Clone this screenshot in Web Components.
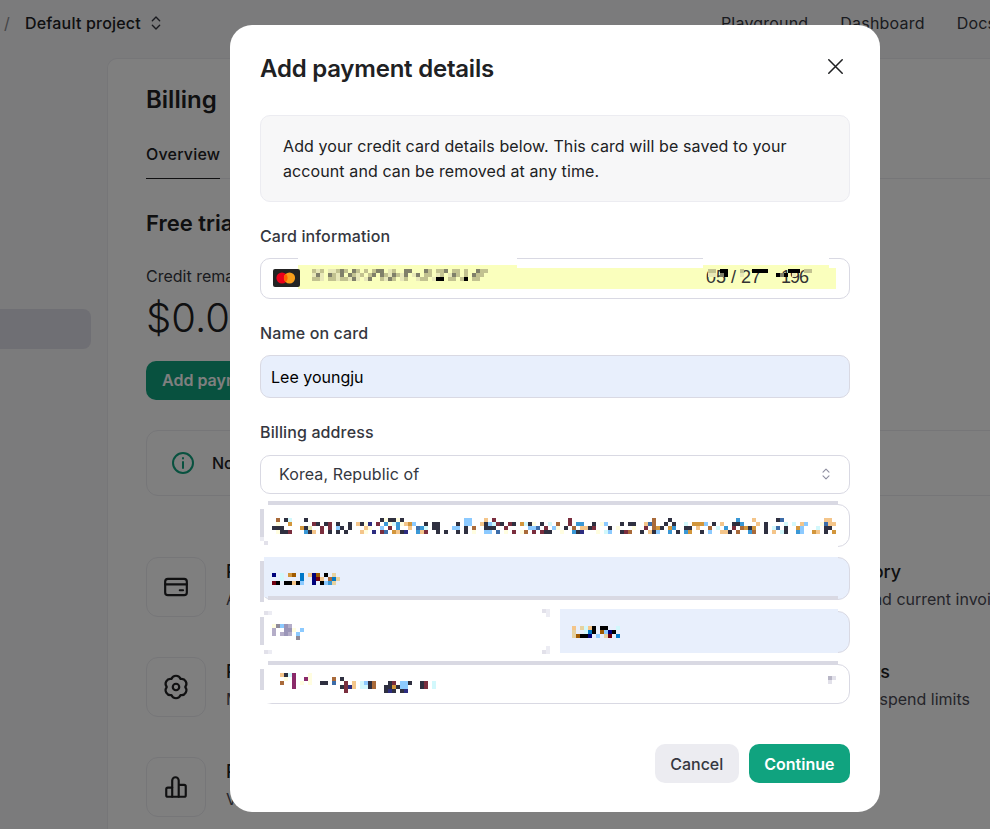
<!DOCTYPE html>
<html>
<head>
<meta charset="utf-8">
<style>
  html, body { margin: 0; height: 100%; overflow: hidden; background: #f7f7f8; font-family: Inter, "Liberation Sans", sans-serif; }
</style>
</head>
<body>
<billing-page></billing-page>
<pay-dialog></pay-dialog>

<script>
// icons used more than once or too long to keep inline
const ICONS = {
  updown: '<path d="M8 9.5l4-4 4 4M8 14.5l4 4 4-4"/>',
  card: '<rect x="2" y="4.5" width="20" height="15" rx="2.5"/><path d="M2 9.5h20M15.5 15h3"/>',
  gear: '<path d="M7.75 4.64A4.5 4.5 0 0 1 16.25 4.64A4.5 4.5 0 0 1 20.5 12A4.5 4.5 0 0 1 16.25 19.36A4.5 4.5 0 0 1 7.75 19.36A4.5 4.5 0 0 1 3.5 12A4.5 4.5 0 0 1 7.75 4.64Z"/><circle cx="12" cy="12" r="3"/>',
  bars: '<path d="M8.5 12.5h-4a1.5 1.5 0 0 0-1.5 1.5v5.5a1.5 1.5 0 0 0 1.5 1.5h15a1.5 1.5 0 0 0 1.5-1.5v-8a1.5 1.5 0 0 0-1.5-1.5h-4"/><path d="M8.5 21v-15a3 3 0 0 1 6 0v15"/>',
  info: '<circle cx="12" cy="12" r="10"/><path d="M12 11v6M12 7v.5"/>',
  close: '<path d="M5 5l14 14M19 5L5 19"/>'
};
function icon(name, size, sw) {
  return `<svg width="${size}" height="${size}" viewBox="0 0 24 24" fill="none" stroke="currentColor" stroke-width="${sw}" stroke-linecap="round" stroke-linejoin="round">${ICONS[name]}</svg>`;
}

// blocky blurred text, rows split by | , a number skips that many cells
const PIX = {
  d:'#2f3040', m:'#7a2e3e', b:'#3a98d6', l:'#8ccaff', o:'#d2963c', p:'#f4c58a', c:'#d2f8fc', y:'#fffde0',
  n:'#2c2c80', r:'#a96a3a', s:'#3c6ca8', K:'#000000', N:'#00007a', B:'#0078c8', M:'#700010', R:'#a05a00',
  t:'#e6d2a0', g:'#c2c290', h:'#80806a', e:'#e8e8b8', u:'#9a95b8', v:'#b4adc8', w:'#8f8a98', P:'#8a2a6a',
  z:'#b8b6c6', x:'#e2e1ea', a:'#ececf3'
};
class PixelText extends HTMLElement {
  connectedCallback() {
    this.attachShadow({mode: 'open'});
    const cols = parseInt(this.getAttribute('cols') || '200');
    const rows = this.getAttribute('rows').split('|');
    let rects = '', maxX = 0;
    rows.forEach((row, y) => {
      let x = 0;
      for (const t of row.match(/\d+|[a-zA-Z]/g) || []) {
        if (/\d/.test(t)) { x += parseInt(t); continue; }
        if (x < cols) { rects += `<rect x="${x*4}" y="${y*4}" width="4" height="4" fill="${PIX[t]}"/>`; maxX = Math.max(maxX, x+1); }
        x++;
      }
    });
    this.shadowRoot.innerHTML = `<style>:host{display:block;line-height:0}</style>
      <svg width="${maxX*4}" height="${rows.length*4}" shape-rendering="crispEdges">${rects}</svg>`;
  }
}
customElements.define('pixel-text', PixelText);

class BillingTile extends HTMLElement {
  connectedCallback() {
    this.attachShadow({mode: 'open'});
    this.shadowRoot.innerHTML = `<style>
      :host { display: flex; gap: 20px; height: 60px; align-items: center; }
      .box { width: 58px; height: 58px; border: 1px solid #ececf1; border-radius: 12px; display: flex; align-items: center; justify-content: center; color: #202123; flex: none; }
      .txt { padding-bottom: 4px; }
      .t { font-size: 18px; font-weight: 500; color: #202123; line-height: 28px; white-space: nowrap; }
      .s { font-size: 16px; color: #4a4a55; line-height: 26px; white-space: nowrap; }
    </style>
    <div class="box">${icon(this.getAttribute('icon'), 26, 2)}</div>
    <div class="txt"><div class="t">${this.getAttribute('title')}</div><div class="s">${this.getAttribute('sub')}</div></div>`;
  }
}
customElements.define('billing-tile', BillingTile);

class BillingPage extends HTMLElement {
  connectedCallback() {
    this.attachShadow({mode: 'open'});
    this.shadowRoot.innerHTML = `<style>
      :host { display: block; height: 829px; width: 990px; overflow: hidden; color: #202123; }
      .top { height: 58px; display: flex; align-items: center; font-size: 16px; font-weight: 500; box-sizing: border-box; padding: 0 0 12px 4px; letter-spacing: .2px; width: 1100px; }
      .top .slash { color: #8a8a8f; font-weight: 400; margin-right: 15px; }
      .top svg { margin-left: 4px; color: #353740; }
      .nav { display: flex; gap: 32px; margin-left: 554px; font-weight: 400; color: #353740; }
      .cols { display: flex; width: 1100px; }
      .side { width: 107px; flex: none; box-sizing: border-box; padding-top: 251px; }
      .side div { width: 91px; height: 40px; background: #dfdee8; border-radius: 0 8px 8px 0; }
      .main { flex: 1; min-width: 0; height: 771px; background: #fff; border: 1px solid #ececf1; border-right: 0; border-radius: 10px 0 0 0; padding: 0 0 0 38px; overflow: hidden; }
      h1 { margin: 25px 0 0; font-size: 24px; font-weight: 600; line-height: 32px; }
      .tabs { border-bottom: 1px solid #ececf1; margin-top: 20px; height: 42px; }
      .tabs span { display: inline-block; font-size: 16px; font-weight: 500; line-height: 24px; padding-top: 6px; height: 36px; border-bottom: 1px solid #202123; letter-spacing: .2px; }
      h2 { margin: 28px 0 0; font-size: 22px; font-weight: 600; line-height: 32px; }
      .lbl { margin-top: 25px; font-size: 16px; line-height: 24px; color: #353740; }
      .amt { font-size: 40px; font-weight: 300; line-height: 56px; margin-top: 2px; color: #202123; }
      .add { margin-top: 15px; width: 240px; height: 39px; background: #10a37f; color: #fff; font-size: 16px; font-weight: 600; border-radius: 10px; line-height: 39px; padding-left: 16px; box-sizing: border-box; }
      .note { margin-top: 30px; width: 1000px; height: 66px; border: 1px solid #ececf1; border-radius: 12px; box-sizing: border-box; display: flex; align-items: center; padding-left: 24px; gap: 17px; font-size: 16px; font-weight: 500; }
      .note svg { color: #10a37f; flex: none; }
      .grid { margin-top: 61px; display: grid; grid-template-columns: 559px 1fr; row-gap: 40px; }
    </style>
    <div class="top">
      <span class="slash">/</span><span>Default project</span>${icon('updown', 22, 1.5)}
      <div class="nav"><span>Playground</span><span>Dashboard</span><span>Docs</span></div>
    </div>
    <div class="cols">
      <div class="side"><div></div></div>
      <div class="main">
        <h1>Billing</h1>
        <div class="tabs"><span>Overview</span></div>
        <h2>Free trial</h2>
        <div class="lbl">Credit remaining</div>
        <div class="amt">$0.00</div>
        <div class="add">Add payment</div>
        <div class="note">${icon('info', 24, 2)}<span>Note:</span></div>
        <div class="grid">
          <billing-tile icon="card" title="Payment methods" sub="Add or change payment method"></billing-tile>
          <billing-tile icon="card" title="Billing history" sub="View past and current invoices"></billing-tile>
          <billing-tile icon="gear" title="Preferences" sub="Manage billing information"></billing-tile>
          <billing-tile icon="gear" title="Usage limits" sub="Set monthly spend limits"></billing-tile>
          <billing-tile icon="bars" title="Pricing" sub="View pricing and FAQs"></billing-tile>
        </div>
      </div>
    </div>`;
  }
}
customElements.define('billing-page', BillingPage);

class FormLabel extends HTMLElement {
  connectedCallback() {
    this.attachShadow({mode: 'open'});
    this.shadowRoot.innerHTML = `<style>
      :host { display: block; font-size: 16px; font-weight: 500; line-height: 24px; color: #353740; margin: 22px 0 10px; letter-spacing: .12px; }
    </style><slot></slot>`;
  }
}
customElements.define('form-label', FormLabel);

// input box with the retouched edges of the screenshot; the attributes say which edges are kept
class AddrField extends HTMLElement {
  connectedCallback() {
    this.attachShadow({mode: 'open'});
    this.shadowRoot.innerHTML = `<style>
      :host { display: block; position: relative; height: var(--h, 43px); margin-top: var(--mt, 10px); }
      .box { box-sizing: border-box; height: 100%; border: 1px solid #d9d9e3; border-radius: 12px; background: #fff; }
      :host([blue]) .box { background: #e8effc; }
      .mask { position: absolute; left: 0; right: 12px; top: 0; bottom: 0; background: #fff; }
      :host([blue]) .mask { left: 4px; background: #e8effc; bottom: 3px; }
      :host([flush]) .mask { left: 0; top: -2px; bottom: 0; }
      :host([open]) .mask { right: 0; }
      :host([keepbottom]) .mask { bottom: 1px; }
      .edge { position: absolute; left: 0; width: 4px; top: 0; bottom: 0; background: #fff; }
      .strip { position: absolute; left: 0; width: 4px; top: var(--st, 5px); height: var(--sh, 28px); background: #d9d9e3; }
      .bar { position: absolute; left: 8px; right: 12px; height: 4px; background: #d9d9e3; }
      .bar.t { top: -3px; }
      .bar.b { bottom: 0; }
      .slot { position: absolute; inset: 0; display: flex; align-items: center; padding-left: 12px; box-sizing: border-box; }
    </style>
    <div class="box"></div><div class="edge"></div><div class="mask"></div><div class="strip"></div>
    ${this.hasAttribute('topbar') ? '<div class="bar t"></div>' : ''}
    ${this.hasAttribute('botbar') ? '<div class="bar b"></div>' : ''}
    <div class="slot"><slot></slot></div>`;
  }
}
customElements.define('addr-field', AddrField);

class UiButton extends HTMLElement {
  connectedCallback() {
    this.attachShadow({mode: 'open'});
    this.shadowRoot.innerHTML = `<style>
      :host { display: inline-flex; align-items: center; height: 39px; padding: 0 15.5px; border-radius: 10px; font-size: 16px; font-weight: 500; background: #ececf1; color: #353740; }
      :host([primary]) { background: #10a37f; color: #fff; font-weight: 600; }
    </style><slot></slot>`;
  }
}
customElements.define('ui-button', UiButton);

class PayDialog extends HTMLElement {
  connectedCallback() {
    this.attachShadow({mode: 'open'});
    this.shadowRoot.innerHTML = `<style>
      :host { position: fixed; inset: 0; background: rgba(0,0,0,.5); display: block; padding: 25px 0 0 230px; box-sizing: border-box; color: #202123; }
      .modal { width: 650px; height: 787px; box-sizing: border-box; background: #fff; border-radius: 22px; padding: 0 30px; display: flex; flex-direction: column; }
      .head { height: 90px; flex: none; display: flex; align-items: center; justify-content: space-between; padding-bottom: 2px; box-sizing: border-box; }
      .head h3 { margin: 0; font-size: 24px; font-weight: 600; line-height: 32px; color: #202123; letter-spacing: -.22px; }
      .head svg { color: #202123; margin: 0 3px 6px 0; }
      .infobox { box-sizing: border-box; height: 87px; background: #f7f7f8; border: 1px solid #ececf1; border-radius: 10px; padding: 18px 22px; font-size: 16px; line-height: 25px; color: #202123; letter-spacing: .1px; }
      .field { box-sizing: border-box; border: 1px solid #d9d9e3; border-radius: 10px; display: flex; align-items: center; font-size: 16px; flex: none; }
      .card { height: 41px; position: relative; }
      .band { position: absolute; left: 37px; right: 13px; top: 9px; height: 21px; background: #faffbd; }
      .patch { position: absolute; top: -1px; height: 7px; background: #fff; }
      .patch2 { position: absolute; top: 6px; height: 3px; background: #faffbd; }
      .brand { position: absolute; left: 12px; top: 10px; width: 27px; height: 18px; background: #232323; border-radius: 2px; }
      .num { position: absolute; left: 51px; top: 10px; }
      .exp { position: absolute; left: 445px; top: 5px; font: 18px/26px "Liberation Sans", sans-serif; color: #333; white-space: pre; }
      .exp span { display: inline-block; margin-left: 20px; letter-spacing: -1px; }
      .exppix { position: absolute; left: 447px; top: 10px; }
      .name { height: 43px; background: #e8effc; padding-left: 10px; color: #000; }
      .select { height: 39px; padding: 0 14px 1px 18px; justify-content: space-between; color: #353740; border-radius: 10px; margin-top: 1px; letter-spacing: .1px; }
      .select svg { color: #8e8ea0; }
      .split { display: flex; gap: 10px; --h: 42px; --mt: 11px; }
      .split addr-field { flex: 1; }
      .split addr-field:first-child { flex: none; width: 290px; }
      .foot { margin-top: 40px; display: flex; justify-content: flex-end; gap: 10px; }
      .abs { position: absolute; }
    </style>
    <div class="modal">
      <div class="head"><h3>Add payment details</h3>${icon('close', 23, 1.6)}</div>
      <div class="infobox">Add your credit card details below. This card will be saved to your account and can be removed at any time.</div>
      <form-label>Card information</form-label>
      <div class="field card">
        <div class="band"></div>
        <div class="patch" style="left:37px;width:219px"></div><div class="patch2" style="left:37px;width:219px"></div>
        <div class="patch" style="left:442px;width:126px"></div><div class="patch2" style="left:442px;width:126px"></div>
        <div class="brand"><svg width="27" height="18" viewBox="0 0 27 18"><circle cx="9" cy="9" r="5.6" fill="#eb001b"/><circle cx="16.5" cy="9" r="5.6" fill="#f79e1b"/><path d="M12.75 4.8a5.6 5.6 0 0 1 0 8.4a5.6 5.6 0 0 1 0-8.4Z" fill="#ff5f00"/></svg></div>
        <pixel-text class="num" cols="44" rows="geg1eeghg1hg1g1ghh1eg2hh3hg1ggh1gg1g2hgg1hhh|ehe1hgeh1hgeg1gh1hgehgeh1eh1gg1eg1ehg1g1hgg1e1hg|gge1ggeggehe1eh2gehg1eg2egg1eKK1gg1gK1gg2eg"></pixel-text>
        <span class="exp">05 / 27<span>196</span></span>
        <pixel-text class="exppix" rows="gg1KK3g2KKKK5KKK1gg|ee1hK3e8KhK1e"></pixel-text>
      </div>
      <form-label>Name on card</form-label>
      <div class="field name">Lee youngju</div>
      <form-label style="margin-bottom:10px">Billing address</form-label>
      <div class="field select"><span>Korea, Republic of</span>${icon('updown', 18, 1.5)}</div>

      <addr-field topbar>
        <pixel-text cols="141" rows="1r1dc3d18dyddyd15ll3p1m18m20r3d16b3p5ds10pp|1y2o5md1dm1d2d1pdyn1m1bycbypol2d1dd4d1ll2pdlcmd1md1ocdy1d1c1r2m1bb2d1yl3d1dd2psr2d1d2c1oool1d1p2ddb3p1d4c1c1pl3yspp|ddd4ode2m1m1ld1d3py2l1m1b2p1sbc1dd3ll1d1r2ddd2m5lls1m1ly1d1r1ppdm3d1y3y2m1rod1ob2dd1p2r1c1b1m1rodo2d1cs1d2ol3c1dd3y1d1mcl1pr1n3y1ll1od|1yddm3bdp1m1d1d1d3py1n1ms1opdn2bpm2d1d2d1d1y2ll1s1y1m1yr1m1mdd2y2bdn3y1cl2dmr2d1pdl2b1d1bo2d1l2ppd1r2br2d1p1cd2bl2op1d1op2llyn1s1p1d"></pixel-text>
        <pixel-text class="abs" style="left:0;bottom:2px" rows="a1|1x"></pixel-text>
      </addr-field>
      <addr-field blue botbar style="--st:4px;--sh:41px">
        <pixel-text rows="N1c1oR1B1pNR1K1t|2c4B2NMp1rBt|MK1KKpKl2N1Klbt"></pixel-text>
      </addr-field>
      <div class="split">
        <addr-field open style="--st:6px;--sh:28px">
          <pixel-text rows="ywluv|v2uuy1l|v1vuv1l|6w"></pixel-text>
          <pixel-text class="abs" style="left:4px;top:-2px" rows="xa"></pixel-text>
          <pixel-text class="abs" style="left:4px;bottom:-1px" rows="xa"></pixel-text>
          <pixel-text class="abs" style="right:0;top:-2px" rows="xa|1a"></pixel-text>
          <pixel-text class="abs" style="right:0;bottom:-1px" rows="1a|xa"></pixel-text>
        </addr-field>
        <addr-field blue flush style="--st:0;--sh:0">
          <pixel-text rows="p1tcpK1KK2c|t2cBK1RlNK|tRKKN1l1tM1B"></pixel-text>
        </addr-field>
      </div>
      <addr-field topbar keepbottom style="--h:40px;--mt:11px;--st:5px;--sh:21px">
        <div style="display:flex;padding-left:8px;margin-bottom:2px"><pixel-text rows="pdcP3y|1y1P2Py5r1d|r2P1y1y2dd1s2m1p1cldr3dm1lld2dm1c|3P11dmnp1ccdr2ddodll3dm1c|16m9dnd1dn"></pixel-text></div>
        <pixel-text class="abs" style="right:14px;top:12px" rows="zx|x"></pixel-text>
      </addr-field>

      <div class="foot"><ui-button>Cancel</ui-button><ui-button primary>Continue</ui-button></div>
    </div>`;
  }
}
customElements.define('pay-dialog', PayDialog);
</script>
</body>
</html>
